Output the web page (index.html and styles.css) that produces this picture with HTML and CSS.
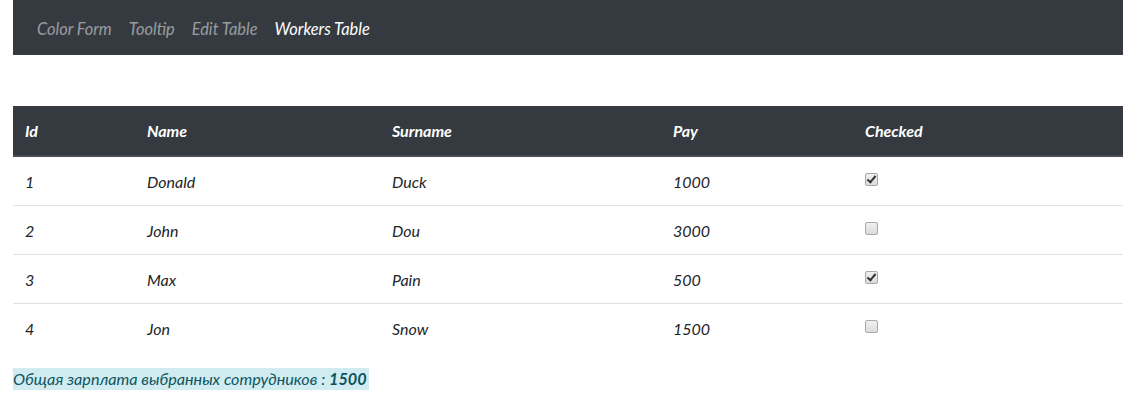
FILE: index.html
```html
<!DOCTYPE html>
<html>
<head>
<meta charset="utf-8">
<link rel="stylesheet" href="styles.css">
</head>
<body>
<div class="page">
  <nav class="navbar">
    <a class="nav-link">Color Form</a>
    <a class="nav-link">Tooltip</a>
    <a class="nav-link">Edit Table</a>
    <a class="nav-link active">Workers Table</a>
  </nav>
  <table class="workers">
    <colgroup>
      <col class="c1"><col class="c2"><col class="c3"><col class="c4"><col class="c5">
    </colgroup>
    <thead>
      <tr><th>Id</th><th>Name</th><th>Surname</th><th>Pay</th><th>Checked</th></tr>
    </thead>
    <tbody>
      <tr><td>1</td><td>Donald</td><td>Duck</td><td>1000</td><td><span class="cb on"></span></td></tr>
      <tr><td>2</td><td>John</td><td>Dou</td><td>3000</td><td><span class="cb"></span></td></tr>
      <tr><td>3</td><td>Max</td><td>Pain</td><td>500</td><td><span class="cb on"></span></td></tr>
      <tr><td>4</td><td>Jon</td><td>Snow</td><td>1500</td><td><span class="cb"></span></td></tr>
    </tbody>
  </table>
  <div class="total"><span class="total-box">Общая зарплата выбранных сотрудников : <b>1500</b></span></div>
</div>
</body>
</html>
```
FILE: styles.css
```css
html, body { margin: 0; padding: 0; background: #fff; }
body {
  font-family: Lato, "Open Sans", sans-serif;
  font-style: italic;
  font-size: 16px;
  color: #212529;
}
.page { padding: 0 9px 0 13px; }
.navbar {
  background: #343a40;
  height: 55px;
  display: flex;
  align-items: center;
  padding: 2px 0 0 24px;
  gap: 17px;
  box-sizing: border-box;
}
.nav-link { color: rgba(255,255,255,0.5); font-size: 16.4px; }
.nav-link.active { color: #fff; }
.workers {
  margin-top: 51px;
  width: 100%;
  border-collapse: collapse;
  table-layout: fixed;
}
.c1 { width: 122px; } .c2 { width: 245px; } .c3 { width: 281px; } .c4 { width: 192px; }
.workers th {
  background: #343a40;
  color: #fff;
  font-weight: bold;
  text-align: left;
  height: 50px;
  padding: 0 12px;
  border-bottom: 2px solid #454d55;
  box-sizing: border-box;
}
.workers td {
  height: 48px;
  padding: 0 12px;
  border-bottom: 1px solid #dee2e6;
  vertical-align: middle;
}
.workers tbody tr:last-child td { border-bottom: none; }
.cb {
  display: inline-block;
  width: 11px; height: 11px;
  border: 1px solid #a9a9a9;
  border-radius: 2px;
  background: linear-gradient(#f0f0f0, #dcdcdc);
  position: relative;
  top: -2px;
}
.cb.on::after {
  content: "";
  position: absolute;
  left: 3px; top: 0px;
  width: 3px; height: 7px;
  border: solid #333;
  border-width: 0 2px 2px 0;
  transform: rotate(40deg);
}
.total { margin-top: 16px; }
.total-box {
  background: #d1ecf1;
  color: #0c5460;
  display: inline-block;
  padding: 1px 2px 1px 0;
  line-height: 20px;
  font-size: 16.2px;
}
.total-box b { font-weight: bold; }
```
